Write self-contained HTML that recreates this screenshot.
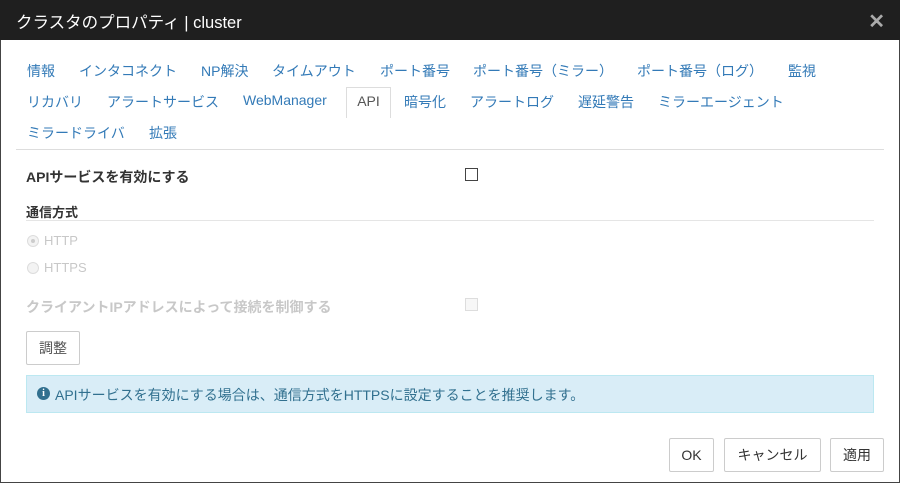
<!DOCTYPE html><html><head><meta charset="utf-8"><style>
*{margin:0;padding:0;box-sizing:border-box}
body{width:900px;height:483px;background:#fff;font-family:"Liberation Sans","Noto Sans CJK JP",sans-serif;font-size:14px;color:#333;position:relative;overflow:hidden}
.a{position:absolute;white-space:nowrap}
.hd{left:0;top:0;width:900px;height:40px;background:#1f1f1f;color:#fff;font-size:16.5px;padding:9px 0 0 16px}
.t{color:#337ab7;font-size:14px}
.g{color:#c8c8c8}
.btn{border:1px solid #ccc;border-radius:2px;background:#fff;text-align:center;line-height:32px;height:34px}
</style></head><body>
<div class="a" style="left:0;top:0;width:900px;height:483px;border:1px solid #444;border-top:none"></div>
<div class="a hd">クラスタのプロパティ | cluster</div>
<div class="a" style="right:15px;top:9px;color:#aaa;font-size:20px;font-weight:bold">✕</div>
<div class="a t" style="left:27px;top:61px">情報</div>
<div class="a t" style="left:79px;top:61px">インタコネクト</div>
<div class="a t" style="left:201px;top:61px">NP解決</div>
<div class="a t" style="left:272px;top:61px">タイムアウト</div>
<div class="a t" style="left:380px;top:61px">ポート番号</div>
<div class="a t" style="left:473px;top:61px">ポート番号（ミラー）</div>
<div class="a t" style="left:637px;top:61px">ポート番号（ログ）</div>
<div class="a t" style="left:788px;top:61px">監視</div>
<div class="a t" style="left:27px;top:92px">リカバリ</div>
<div class="a t" style="left:107px;top:92px">アラートサービス</div>
<div class="a t" style="left:243px;top:92px">WebManager</div>
<div class="a" style="left:346px;top:87px;width:45px;height:31px;border:1px solid #ddd;border-bottom:none;background:#fff;text-align:center;padding-top:5px;color:#555">API</div>
<div class="a t" style="left:404px;top:92px">暗号化</div>
<div class="a t" style="left:470px;top:92px">アラートログ</div>
<div class="a t" style="left:578px;top:92px">遅延警告</div>
<div class="a t" style="left:658px;top:92px">ミラーエージェント</div>
<div class="a t" style="left:27px;top:123px">ミラードライバ</div>
<div class="a t" style="left:149px;top:123px">拡張</div>
<div class="a" style="left:16px;top:149px;width:868px;height:1px;background:#ddd"></div>
<div class="a" style="left:26px;top:167px;font-weight:bold">APIサービスを有効にする</div>
<div class="a" style="left:465px;top:168px;width:13px;height:13px;border:1px solid #444"></div>
<div class="a" style="left:26px;top:202px;font-weight:bold;font-size:13px">通信方式</div>
<div class="a" style="left:26px;top:220px;width:848px;height:1px;background:#e5e5e5"></div>
<div class="a" style="left:27px;top:235px;width:12px;height:12px;border:1px solid #ddd;border-radius:50%;background:#f3f3f3"><div style="width:4px;height:4px;background:#ccc;border-radius:50%;margin:3px"></div></div>
<div class="a g" style="left:44px;top:233px;font-size:13px">HTTP</div>
<div class="a" style="left:27px;top:262px;width:12px;height:12px;border:1px solid #ddd;border-radius:50%;background:#f3f3f3"></div>
<div class="a g" style="left:44px;top:260px;font-size:13px">HTTPS</div>
<div class="a g" style="left:26px;top:297px;font-weight:bold">クライアントIPアドレスによって接続を制御する</div>
<div class="a" style="left:465px;top:298px;width:13px;height:13px;border:1px solid #ddd;background:#f7f7f7"></div>
<div class="a btn" style="left:26px;top:331px;width:54px;color:#555">調整</div>
<div class="a" style="left:26px;top:375px;width:848px;height:38px;background:#d9edf7;border:1px solid #bce8f1"></div>
<div class="a" style="left:37px;top:387px;width:13px;height:13px;border-radius:50%;background:#31708f;color:#fff;font-size:10px;font-weight:bold;text-align:center;line-height:13px;font-family:'Liberation Serif',serif">i</div>
<div class="a" style="left:55px;top:385px;color:#31708f">APIサービスを有効にする場合は、通信方式をHTTPSに設定することを推奨します。</div>
<div class="a btn" style="left:669px;top:438px;width:45px">OK</div>
<div class="a btn" style="left:724px;top:438px;width:97px">キャンセル</div>
<div class="a btn" style="left:830px;top:438px;width:54px">適用</div>
</body></html>
